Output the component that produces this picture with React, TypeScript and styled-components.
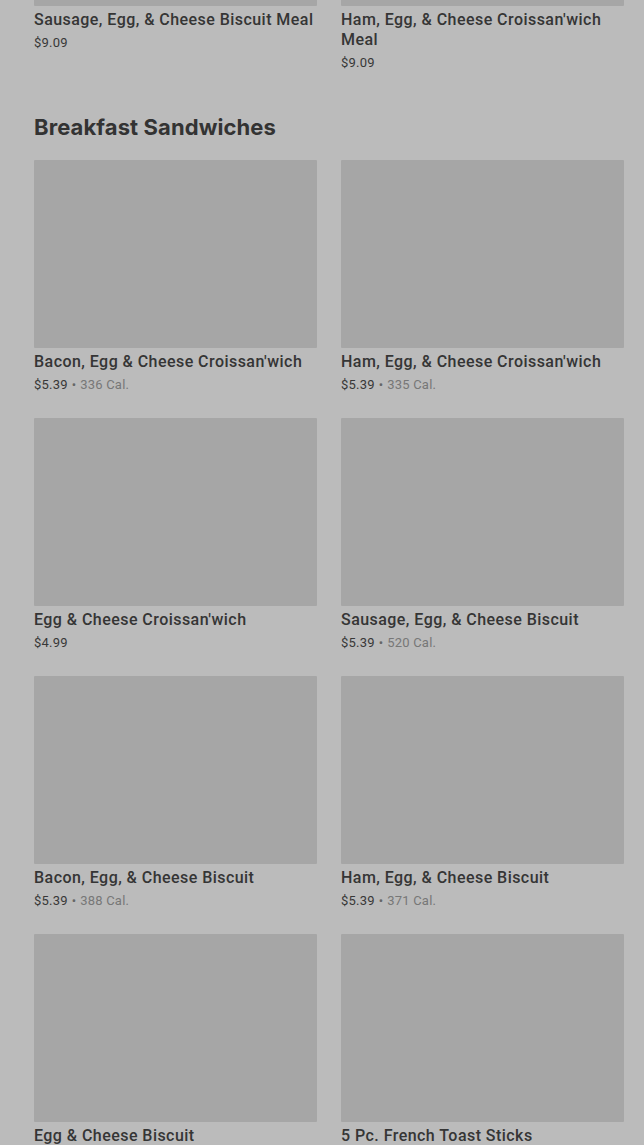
import React from "react";
import styled, { createGlobalStyle } from "styled-components";

const Global = createGlobalStyle`
  html, body { margin: 0; padding: 0; background: #bbbbbb; }
  body { font-family: Roboto, "Liberation Sans", sans-serif; color: #333333; overflow: hidden; }
`;

const Page = styled.div`
  padding: 0 20px 0 34px;
  margin-top: -182px;
`;

const Grid = styled.div`
  display: grid;
  grid-template-columns: 283px 283px;
  column-gap: 24px;
  row-gap: 24px;
  align-items: start;
`;

const Heading = styled.h2`
  margin: 41px 0 19px;
  font-family: Inter, "Liberation Sans", sans-serif;
  font-weight: 700;
  font-size: 22px;
  line-height: 28px;
  letter-spacing: 0.1px;
  color: #333333;
`;

const Card = styled.div`
  display: flex;
  flex-direction: column;
`;

const Thumb = styled.div`
  height: 188px;
  background: #a6a6a6;
  border-radius: 1px;
`;

const Title = styled.div`
  margin-top: 4px;
  font-size: 16px;
  font-weight: 500;
  line-height: 20px;
  letter-spacing: 0.45px;
  color: #353535;
`;

const PriceRow = styled.div`
  margin-top: 3px;
  font-size: 13px;
  line-height: 19px;
  letter-spacing: 0.2px;
  color: #383838;
`;

const Sep = styled.span`
  color: #666;
  margin: 0 4px;
`;

const Cal = styled.span`
  color: #777777;
`;

type Item = { name: string; price: string; cal?: string };

const top: Item[] = [
  { name: "Sausage, Egg, & Cheese Biscuit Meal", price: "$9.09" },
  { name: "Ham, Egg, & Cheese Croissan'wich Meal", price: "$9.09" },
];

const items: Item[] = [
  { name: "Bacon, Egg & Cheese Croissan'wich", price: "$5.39", cal: "336 Cal." },
  { name: "Ham, Egg, & Cheese Croissan'wich", price: "$5.39", cal: "335 Cal." },
  { name: "Egg & Cheese Croissan'wich", price: "$4.99" },
  { name: "Sausage, Egg, & Cheese Biscuit", price: "$5.39", cal: "520 Cal." },
  { name: "Bacon, Egg, & Cheese Biscuit", price: "$5.39", cal: "388 Cal." },
  { name: "Ham, Egg, & Cheese Biscuit", price: "$5.39", cal: "371 Cal." },
  { name: "Egg & Cheese Biscuit", price: "$4.39" },
  { name: "5 Pc. French Toast Sticks", price: "$3.19" },
];

const ItemCard = ({ item }: { item: Item }) => (
  <Card>
    <Thumb />
    <Title>{item.name}</Title>
    <PriceRow>
      {item.price}
      {item.cal && (
        <>
          <Sep>•</Sep>
          <Cal>{item.cal}</Cal>
        </>
      )}
    </PriceRow>
  </Card>
);

export default function App() {
  return (
    <>
      <Global />
      <Page>
        <Grid>
          {top.map((it) => (
            <ItemCard key={it.name} item={it} />
          ))}
        </Grid>
        <Heading>Breakfast Sandwiches</Heading>
        <Grid>
          {items.map((it) => (
            <ItemCard key={it.name} item={it} />
          ))}
        </Grid>
      </Page>
    </>
  );
}
